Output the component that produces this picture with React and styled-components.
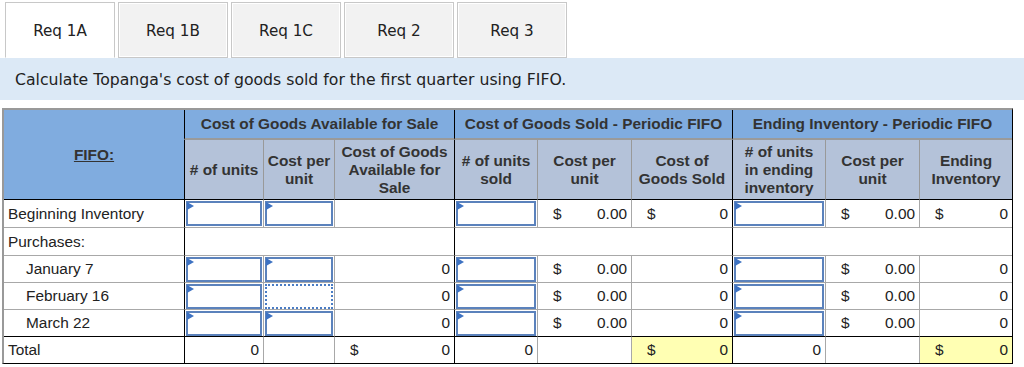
import styled, { createGlobalStyle } from 'styled-components';

const GlobalStyle = createGlobalStyle`
  body {
    margin: 0;
    background: #fff;
    font-family: 'Liberation Sans', Arial, sans-serif;
    color: #222;
  }
`;

const tabs = ['Req 1A', 'Req 1B', 'Req 1C', 'Req 2', 'Req 3'];

const widths = [180, 79, 71, 120, 83, 94, 101, 93, 94, 93];

// each row: label, indent, cells (9) — type: in / dot / num / money / empty
const rows = [
  {
    label: 'Beginning Inventory',
    cells: [
      { t: 'in' }, { t: 'in' }, { t: 'empty' },
      { t: 'in' }, { t: 'money', v: '0.00' }, { t: 'money', v: '0' },
      { t: 'in' }, { t: 'money', v: '0.00' }, { t: 'money', v: '0' },
    ],
  },
  { label: 'Purchases:', spans: true },
  {
    label: 'January 7',
    indent: true,
    cells: [
      { t: 'in' }, { t: 'in' }, { t: 'num', v: '0' },
      { t: 'in' }, { t: 'money', v: '0.00' }, { t: 'num', v: '0' },
      { t: 'in' }, { t: 'money', v: '0.00' }, { t: 'num', v: '0' },
    ],
  },
  {
    label: 'February 16',
    indent: true,
    cells: [
      { t: 'in' }, { t: 'dot' }, { t: 'num', v: '0' },
      { t: 'in' }, { t: 'money', v: '0.00' }, { t: 'num', v: '0' },
      { t: 'in' }, { t: 'money', v: '0.00' }, { t: 'num', v: '0' },
    ],
  },
  {
    label: 'March 22',
    indent: true,
    cells: [
      { t: 'in' }, { t: 'in' }, { t: 'num', v: '0' },
      { t: 'in' }, { t: 'money', v: '0.00' }, { t: 'num', v: '0' },
      { t: 'in' }, { t: 'money', v: '0.00' }, { t: 'num', v: '0' },
    ],
  },
  {
    label: 'Total',
    total: true,
    cells: [
      { t: 'num', v: '0' }, { t: 'empty' }, { t: 'money', v: '0' },
      { t: 'num', v: '0' }, { t: 'empty' }, { t: 'money', v: '0', y: true },
      { t: 'num', v: '0' }, { t: 'empty' }, { t: 'money', v: '0', y: true },
    ],
  },
];

const subHeads = [
  ['# of units'],
  ['Cost per', 'unit'],
  ['Cost of Goods', 'Available for', 'Sale'],
  ['# of units', 'sold'],
  ['Cost per', 'unit'],
  ['Cost of', 'Goods Sold'],
  ['# of units', 'in ending', 'inventory'],
  ['Cost per', 'unit'],
  ['Ending', 'Inventory'],
];

const rowHeights = [28, 28, 27, 27, 27, 27];

export default function App() {
  return (
    <Page>
      <GlobalStyle />
      <TabBar>
        {tabs.map((t, i) => (
          <Tab key={t} $active={i === 0}>{t}</Tab>
        ))}
      </TabBar>
      <Instruction>Calculate Topanga's cost of goods sold for the first quarter using FIFO.</Instruction>
      <Sheet>
        <colgroup>
          {widths.map((w, i) => (
            <col key={i} style={{ width: w }} />
          ))}
        </colgroup>
        <thead>
          <tr>
            <FifoHead rowSpan={2}>
              <u>FIFO:</u>
            </FifoHead>
            <GroupHead colSpan={3}>Cost of Goods Available for Sale</GroupHead>
            <GroupHead colSpan={3}>Cost of Goods Sold - Periodic FIFO</GroupHead>
            <GroupHead colSpan={3}>Ending Inventory - Periodic FIFO</GroupHead>
          </tr>
          <tr>
            {subHeads.map((lines, i) => (
              <SubHead key={i} $section={i % 3 === 0}>
                {lines.map((l, j) => (
                  <span key={j}>
                    {j > 0 && <br />}
                    {l}
                  </span>
                ))}
              </SubHead>
            ))}
          </tr>
        </thead>
        <tbody>
          {rows.map((r, ri) => (
            <tr key={r.label}>
              <LabelCell
                $indent={r.indent}
                $first={ri === 0}
                $total={r.total}
                style={{ height: rowHeights[ri] }}
              >
                {r.label}
              </LabelCell>
              {r.spans
                ? [0, 1, 2].map((k) => <Cell key={k} colSpan={3} $section />)
                : r.cells.map((c, ci) => (
                    <Cell
                      key={ci}
                      $section={ci % 3 === 0}
                      $first={ri === 0}
                      $total={r.total}
                      $yellow={c.y}
                      $input={c.t === 'in' || c.t === 'dot'}
                    >
                      {(c.t === 'in' || c.t === 'dot') && <InputBox $dotted={c.t === 'dot'} />}
                      {c.t === 'num' && <Num>{c.v}</Num>}
                      {c.t === 'money' && (
                        <Money>
                          <span>$</span>
                          <span>{c.v}</span>
                        </Money>
                      )}
                    </Cell>
                  ))}
            </tr>
          ))}
        </tbody>
      </Sheet>
    </Page>
  );
}

const Page = styled.div`
  padding-top: 2px;
  width: 1024px;
`;

const TabBar = styled.div`
  display: flex;
  gap: 3px;
  padding-left: 5px;
  height: 56px;
`;

const Tab = styled.div`
  box-sizing: border-box;
  width: 110px;
  height: 56px;
  display: flex;
  align-items: center;
  justify-content: center;
  font-family: 'DejaVu Sans', Verdana, sans-serif;
  font-size: 15.2px;
  color: #222;
  background: ${(p) => (p.$active ? '#fff' : '#f2f2f2')};
  border: 1px solid #c8c8c8;
  border-bottom-color: ${(p) => (p.$active ? '#fff' : '#c8c8c8')};
  box-shadow: ${(p) => (p.$active ? 'none' : 'inset 0 0 0 1px #fff')};
  padding-top: 2px;
`;

const Instruction = styled.div`
  height: 42px;
  display: flex;
  align-items: center;
  padding-left: 15px;
  background: #dce9f6;
  font-family: 'DejaVu Sans', Verdana, sans-serif;
  font-size: 15.7px;
  color: #222;
`;

const Sheet = styled.table`
  margin: 8px 0 0 2px;
  width: 1008px;
  table-layout: fixed;
  border-collapse: separate;
  border-spacing: 0;
  border-top: 2px solid #999;
  border-left: 2px solid #999;
  border-right: 1px solid #000;
  border-bottom: 1px solid #000;
  font-size: 15.4px;
`;

const HeadBase = styled.th`
  padding: 0 3px;
  font-weight: bold;
  color: #333;
  line-height: 18px;
  text-align: center;
`;

const FifoHead = styled(HeadBase)`
  background: #80acdf;
  vertical-align: middle;
`;

const GroupHead = styled(HeadBase)`
  height: 28px;
  background: #80acdf;
  border-left: 1px solid #000;
  border-bottom: 2px solid #9a9a9a;
`;

const SubHead = styled(HeadBase)`
  height: 59px;
  background: #b4c2d9;
  border-left: 1px solid ${(p) => (p.$section ? '#000' : '#999')};
`;

const LabelCell = styled.td`
  box-sizing: border-box;
  padding: 0 0 0 ${(p) => (p.$indent ? '22px' : '4px')};
  white-space: nowrap;
  border-top: 1px solid ${(p) => (p.$first || p.$total ? '#000' : '#a8a8a8')};
`;

const Cell = styled.td`
  position: relative;
  padding: ${(p) => (p.$input ? '0 1px' : '0 4px 0 15px')};
  text-align: right;
  background: ${(p) => (p.$yellow ? '#ffffb3' : '#fff')};
  border-left: 1px solid ${(p) => (p.$section ? '#000' : '#a8a8a8')};
  border-top: 1px solid ${(p) => (p.$first || p.$total ? '#000' : '#a8a8a8')};
`;

const InputBox = styled.div`
  position: relative;
  box-sizing: border-box;
  height: 25px;
  background: #fff;
  border: 2px ${(p) => (p.$dotted ? 'dotted #4a7cc4' : 'solid #5b82bc')};

  &::before {
    content: '';
    position: absolute;
    top: -1px;
    left: -1px;
    border-left: 7px solid #3d72c2;
    border-top: 4px solid transparent;
    border-bottom: 4px solid transparent;
    display: ${(p) => (p.$dotted ? 'none' : 'block')};
  }
`;

const Num = styled.span`
  display: block;
  text-align: right;
`;

const Money = styled.div`
  display: flex;
  justify-content: space-between;
`;
